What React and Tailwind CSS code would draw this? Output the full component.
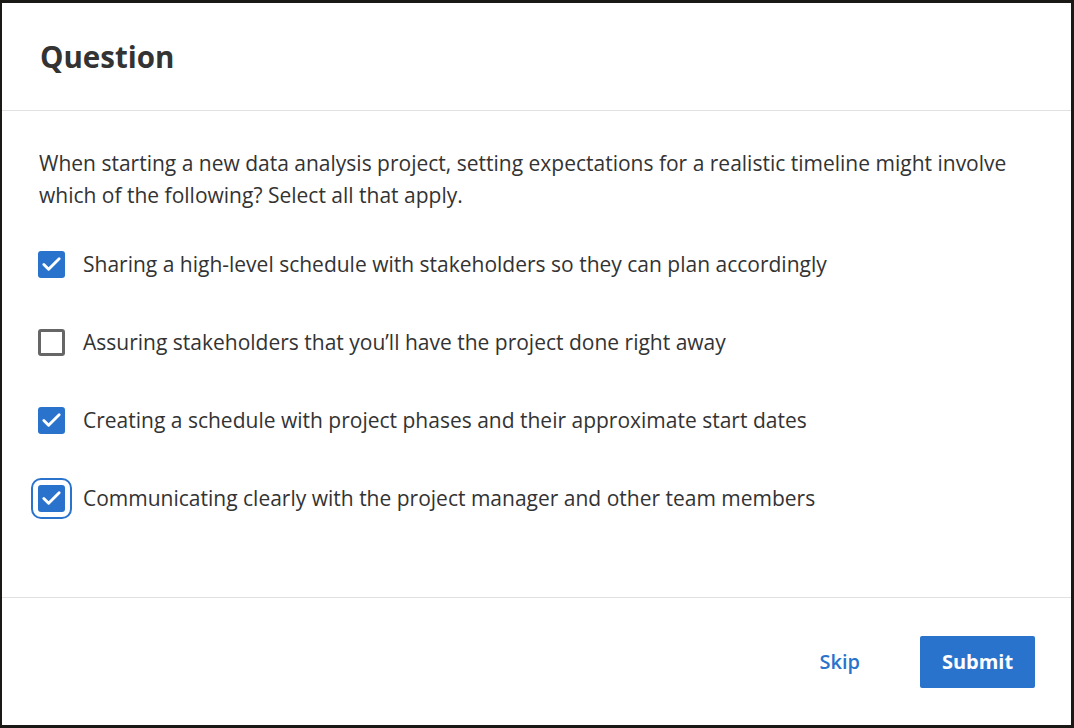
import { Check } from 'lucide-react'

const OPTIONS = [
  { text: 'Sharing a high-level schedule with stakeholders so they can plan accordingly', checked: true },
  { text: 'Assuring stakeholders that you’ll have the project done right away', checked: false },
  { text: 'Creating a schedule with project phases and their approximate start dates', checked: true },
  { text: 'Communicating clearly with the project manager and other team members', checked: true, focused: true },
]

function Box({ checked, focused }) {
  return (
    <div
      className={
        'w-[27px] h-[27px] shrink-0 rounded-[3px] flex items-center justify-center ' +
        (checked ? 'bg-[#2a73cc]' : 'border-[3px] border-[#666666] bg-white') +
        (focused ? ' outline-2 outline-[#2a73cc] outline-offset-[5px]' : '')
      }
    >
      {checked && <Check size={23} strokeWidth={3} className="text-white" />}
    </div>
  )
}

export default function App() {
  return (
    <div className="w-[1074px] h-[728px] bg-[#1b1916] pt-[3px] pl-[2px] pr-[3px] pb-[3px]" style={{ fontFamily: '"Open Sans", sans-serif' }}>
      <div className="h-full bg-white flex flex-col text-[#333333]">
        <div className="h-[108px] border-b border-[#e1e1e1] flex items-center px-[38px] shrink-0">
          <h1 className="text-[29.5px] font-bold leading-none pt-[1px]">Question</h1>
        </div>

        <div className="flex-1 px-[37px] pt-[36px]">
          <p className="text-[21px] leading-[32px]">
            When starting a new data analysis project, setting expectations for a realistic timeline might involve which of the following? Select all that apply.
          </p>
          <div className="mt-[39px] -ml-px flex flex-col gap-[50px]">
            {OPTIONS.map((o) => (
              <div key={o.text} className="flex items-center gap-[18px] h-[28px]">
                <Box checked={o.checked} focused={o.focused} />
                <span className="text-[21px] leading-[28px]">{o.text}</span>
              </div>
            ))}
          </div>
        </div>

        <div className="h-[128px] border-t border-[#e1e1e1] flex items-center justify-end gap-[40px] pr-[36px] shrink-0">
          <button className="text-[#2a73cc] text-[20px] font-semibold px-[20px] h-[52px]">Skip</button>
          <button className="bg-[#2a73cc] text-white text-[20px] font-bold w-[115px] h-[52px] rounded-[2px]">Submit</button>
        </div>
      </div>
    </div>
  )
}
